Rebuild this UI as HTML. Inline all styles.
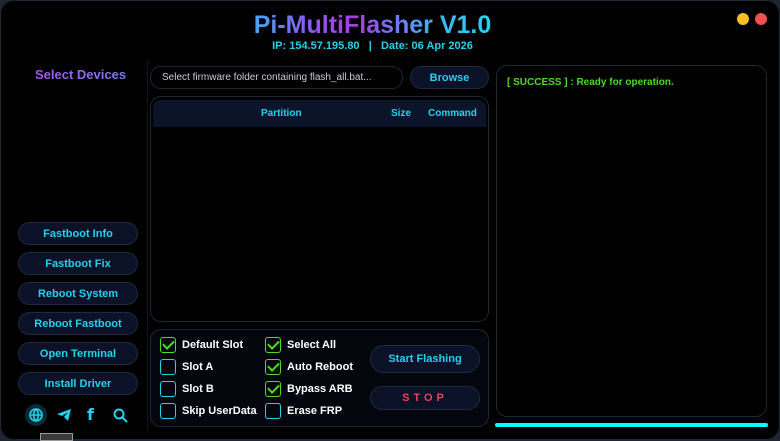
<!DOCTYPE html><html><head><meta charset="utf-8"><style>
*{box-sizing:border-box;margin:0;padding:0}
body{width:780px;height:440px;background:#1e2430;overflow:hidden;font-family:"Liberation Sans","DejaVu Sans",sans-serif;font-weight:bold;position:relative}
.win{position:absolute;left:0;top:0;width:780px;height:440px;background:#000;box-shadow:inset 0 0 0 1px #1e2736;border-radius:14px}
.a{position:absolute}
.title{left:0;width:745px;text-align:center;top:11px;font-size:25px}
.title span{background:linear-gradient(90deg,#3fa9f5 0%,#8a5cf5 22%,#a83be0 42%,#6a80f2 62%,#3bb8f0 78%,#22d3ee 100%);background-clip:text;-webkit-background-clip:text;color:transparent}
.ip{left:0;width:745px;text-align:center;top:40px;font-size:11px;color:#22d3ee}
.sd{left:35px;top:67px;font-size:13px;background:linear-gradient(90deg,#a855f7,#7c7cf0);-webkit-background-clip:text;background-clip:text;color:transparent}
.panel{border:1px solid #1f2836;border-radius:11px}
.btn{position:absolute;left:18px;width:120px;height:23px;background:#0b1126;border:1px solid #1f2a3f;border-radius:12px;color:#22d3ee;font-size:11px;text-align:center;line-height:22px}
.cb{position:absolute;width:16px;height:16px;border:1px solid #22d3ee;border-radius:3px}
.cb.on{border-color:#4ade20}
.cb.on::after{content:"";position:absolute;left:4px;top:0px;width:5px;height:9px;border:solid #4ade20;border-width:0 2.5px 2.5px 0;transform:rotate(45deg)}
.lb{position:absolute;color:#fff;font-size:11px}
</style></head><body><div class="win">
<div class="a" style="left:737px;top:13px;width:12px;height:12px;border-radius:50%;background:#fbbf24"></div>
<div class="a" style="left:755px;top:13px;width:12px;height:12px;border-radius:50%;background:#f05252"></div>
<div class="a title"><span>Pi-MultiFlasher V1.0</span></div>
<div class="a ip">IP: 154.57.195.80 &nbsp;&nbsp;| &nbsp;&nbsp;Date: 06 Apr 2026</div>
<div class="a sd">Select Devices</div>
<div class="a" style="left:147px;top:60px;width:1px;height:370px;background:#111722"></div>
<div class="a panel" style="left:150px;top:66px;width:253px;height:23px;font-weight:normal;color:#c8ccd4;font-size:10px;line-height:21px;padding-left:11px">Select firmware folder containing flash_all.bat...</div>
<div class="a" style="left:410px;top:66px;width:79px;height:23px;background:#0b1126;border:1px solid #1f2a3f;border-radius:12px;color:#22d3ee;font-size:11px;text-align:center;line-height:22px">Browse</div>
<div class="a panel" style="left:150px;top:96px;width:339px;height:226px">
<div class="a" style="left:2px;top:3px;width:333px;height:27px;background:#0c1429;border-radius:8px 8px 0 0;color:#22d3ee;font-size:10px;line-height:27px">
<span class="a" style="left:108px">Partition</span><span class="a" style="left:238px">Size</span><span class="a" style="left:275px">Command</span></div></div>
<div class="a panel" style="left:496px;top:65px;width:271px;height:352px"><div class="a" style="left:10px;top:11px;color:#4ade20;font-size:10px">[ SUCCESS ] : Ready for operation.</div></div>
<div class="a" style="left:495px;top:423px;width:273px;height:4px;border-radius:2px;background:#00ffff"></div>
<div class="btn" style="top:222px">Fastboot Info</div>
<div class="btn" style="top:252px">Fastboot Fix</div>
<div class="btn" style="top:282px">Reboot System</div>
<div class="btn" style="top:312px">Reboot Fastboot</div>
<div class="btn" style="top:342px">Open Terminal</div>
<div class="btn" style="top:372px">Install Driver</div>
<div class="a" style="left:25px;top:404px;width:22px;height:22px;border-radius:50%;background:#0a2a36"></div>
<svg class="a" style="left:29px;top:408px" width="14" height="14" viewBox="0 0 14 14" fill="none" stroke="#22d3ee" stroke-width="1.6"><circle cx="7" cy="7" r="6"/><path d="M1 7h12M7 1c-3 3-3 9 0 12M7 1c3 3 3 9 0 12"/></svg>
<svg class="a" style="left:57px;top:409px" width="14" height="12" viewBox="0 0 14 12"><path d="M0 5L14 0L11 12L7 8L11 3L5 7Z" fill="#22d3ee"/></svg>
<div class="a" style="left:87px;top:405px;color:#22d3ee;font-size:16px;font-family:'DejaVu Sans'">f</div>
<svg class="a" style="left:113px;top:408px" width="15" height="15" viewBox="0 0 15 15" fill="none" stroke="#22d3ee" stroke-width="2"><circle cx="6" cy="6" r="4.5"/><path d="M9.5 9.5L14 14"/></svg>
<div class="a" style="left:40px;top:433px;width:33px;height:8px;background:#3a3a3a;border:1px solid #999"></div>
<div class="a panel" style="left:150px;top:329px;width:339px;height:98px;background:#03060d"></div>
<div class="cb on" style="left:160px;top:337px"></div><div class="lb" style="left:182px;top:339px">Default Slot</div>
<div class="cb" style="left:160px;top:359px"></div><div class="lb" style="left:182px;top:361px">Slot A</div>
<div class="cb" style="left:160px;top:381px"></div><div class="lb" style="left:182px;top:383px">Slot B</div>
<div class="cb" style="left:160px;top:403px"></div><div class="lb" style="left:182px;top:405px">Skip UserData</div>
<div class="cb on" style="left:265px;top:337px"></div><div class="lb" style="left:287px;top:339px">Select All</div>
<div class="cb on" style="left:265px;top:359px"></div><div class="lb" style="left:287px;top:361px">Auto Reboot</div>
<div class="cb on" style="left:265px;top:381px"></div><div class="lb" style="left:287px;top:383px">Bypass ARB</div>
<div class="cb" style="left:265px;top:403px"></div><div class="lb" style="left:287px;top:405px">Erase FRP</div>
<div class="a" style="left:370px;top:345px;width:110px;height:28px;background:#0b1126;border:1px solid #1f2a3f;border-radius:14px;color:#22d3ee;font-size:11px;text-align:center;line-height:26px">Start Flashing</div>
<div class="a" style="left:370px;top:386px;width:110px;height:24px;background:#0b1126;border:1px solid #1f2a3f;border-radius:12px;color:#f43f5e;font-size:11px;text-align:center;line-height:23px;letter-spacing:4px">STOP</div>
</div></body></html>
